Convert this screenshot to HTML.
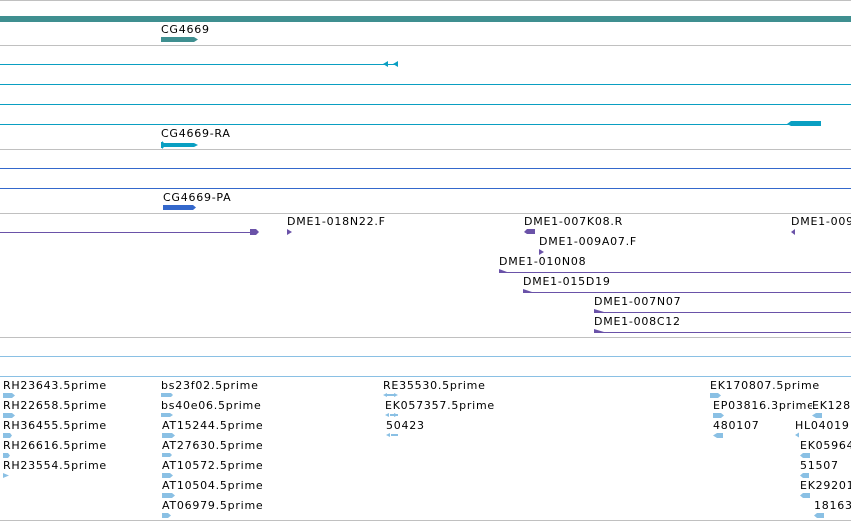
<!DOCTYPE html>
<html><head><meta charset="utf-8"><style>
body{margin:0;width:851px;height:521px;overflow:hidden;background:#fff;position:relative;font-family:"DejaVu Sans","Liberation Sans",sans-serif;font-size:11px;color:#000}
div{position:absolute}
.h{left:0;width:851px;height:1px}
.g{background:#c0c0c0}
.c{background:#0a9fc2}
.b{background:#3468cc}
.p{background:#6a52a8}
.l{background:#8ac0e4}
.t{line-height:13px;white-space:nowrap;letter-spacing:0.75px}
svg{position:absolute;left:0;top:0}
</style></head><body>
<div class="h g" style="top:0"></div>
<div class="h" style="top:16px;height:6px;background:#3f8f90"></div>
<div class="h g" style="top:45px"></div>
<div class="t" style="left:161px;top:23px">CG4669</div>
<div class="h c" style="top:64px;width:398px"></div>
<div class="h c" style="top:84px"></div>
<div class="h c" style="top:104px"></div>
<div class="h c" style="top:124px;width:820px"></div>
<div class="t" style="left:161px;top:127px">CG4669-RA</div>
<div class="h g" style="top:149px"></div>
<div class="h b" style="top:168px"></div>
<div class="h b" style="top:188px"></div>
<div class="t" style="left:163px;top:191px">CG4669-PA</div>
<div class="h g" style="top:213px"></div>
<div class="h p" style="top:232px;width:256px"></div>
<div class="t" style="left:287px;top:215px">DME1-018N22.F</div>
<div class="t" style="left:524px;top:215px">DME1-007K08.R</div>
<div class="t" style="left:791px;top:215px">DME1-009A07.R</div>
<div class="t" style="left:539px;top:235px">DME1-009A07.F</div>
<div class="t" style="left:499px;top:255px">DME1-010N08</div>
<div class="h p" style="top:272px;left:499px;width:352px"></div>
<div class="t" style="left:523px;top:275px">DME1-015D19</div>
<div class="h p" style="top:292px;left:523px;width:328px"></div>
<div class="t" style="left:594px;top:295px">DME1-007N07</div>
<div class="h p" style="top:312px;left:594px;width:257px"></div>
<div class="t" style="left:594px;top:315px">DME1-008C12</div>
<div class="h p" style="top:332px;left:594px;width:257px"></div>
<div class="h g" style="top:337px"></div>
<div class="h l" style="top:356px"></div>
<div class="h l" style="top:376px"></div>
<div class="h g" style="top:520px"></div>

<div class="t" style="left:3px;top:379px">RH23643.5prime</div>
<div class="t" style="left:3px;top:399px">RH22658.5prime</div>
<div class="t" style="left:3px;top:419px">RH36455.5prime</div>
<div class="t" style="left:3px;top:439px">RH26616.5prime</div>
<div class="t" style="left:3px;top:459px">RH23554.5prime</div>
<div class="t" style="left:161px;top:379px">bs23f02.5prime</div>
<div class="t" style="left:161px;top:399px">bs40e06.5prime</div>
<div class="t" style="left:162px;top:419px">AT15244.5prime</div>
<div class="t" style="left:162px;top:439px">AT27630.5prime</div>
<div class="t" style="left:162px;top:459px">AT10572.5prime</div>
<div class="t" style="left:162px;top:479px">AT10504.5prime</div>
<div class="t" style="left:162px;top:499px">AT06979.5prime</div>
<div class="t" style="left:383px;top:379px">RE35530.5prime</div>
<div class="t" style="left:385px;top:399px">EK057357.5prime</div>
<div class="t" style="left:386px;top:419px">50423</div>
<div class="t" style="left:710px;top:379px">EK170807.5prime</div>
<div class="t" style="left:713px;top:399px">EP03816.3prime</div>
<div class="t" style="left:812px;top:399px;background:#fff">EK128</div>
<div class="t" style="left:713px;top:419px">480107</div>
<div class="t" style="left:795px;top:419px">HL04019</div>
<div class="t" style="left:800px;top:439px">EK05964</div>
<div class="t" style="left:800px;top:459px">51507</div>
<div class="t" style="left:800px;top:479px">EK29201</div>
<div class="t" style="left:814px;top:499px">18163</div>

<svg width="851" height="521">
<g fill="#3f8f90"><path d="M161 37h33l4 2.5-4 2.5h-33z"/></g>
<g fill="#0a9fc2">
<path d="M383 64l5-3v6z M393 64l5-3v6z"/>
<path d="M787 124l4-3h30v5h-30z"/>
<path d="M161 142h1v-1l2 2h30l4 2-4 2h-30l-2 2v-1h-1z"/>
</g>
<g fill="#3468cc"><path d="M163 205h30l3 2.5-3 2.5h-30z"/></g>
<g fill="#6a52a8">
<path d="M250 229h6l3 3-3 3h-6z"/>
<path d="M287 229l5 3-5 3z"/>
<path d="M524 232l3-3h8v5h-8z"/>
<path d="M539 249l5 3-5 3z"/>
<path d="M791 232l4-3v6z"/>
<path d="M499 269l8 3h-8v2z"/>
<path d="M523 289l9 3h-9v2z"/>
<path d="M594 309l10 3h-10v2z"/>
<path d="M594 329l10 3h-10v2z"/>
</g>
<g fill="#8ac0e4">
<path d="M3 393h9l3 2.5-3 2.5h-9z"/>
<path d="M3 413h9l3 2.5-3 2.5h-9z"/>
<path d="M3 433h7l2 2.5-2 2.5h-7z"/>
<path d="M3 453h5l2 2.5-2 2.5h-5z"/>
<path d="M3 473l6 2.5-6 2.5z"/>
<path d="M161 393h4l3 2-3 2h-4z M165 393h6l2 2-2 2h-6z"/>
<path d="M161 413h9l3 2-3 2h-9z"/>
<path d="M162 433h10l3 2.5-3 2.5h-10z"/>
<path d="M162 453h8l2 2-2 2h-8z"/>
<path d="M162 473h8l3 2.5-3 2.5h-8z"/>
<path d="M162 493h10l3 2.5-3 2.5h-10z"/>
<path d="M162 513h6l3 2.5-3 2.5h-6z"/>
<path d="M383 395l4-2v1h7v-1l4 2-4 2v-1h-7v1z"/>
<path d="M385 415l4-2v4z M390 414h8v2h-8z M394 413l4 2-4 2z"/>
<path d="M386 435l4-2v4z M391 434h7v2h-7z"/>
<path d="M710 393h8l3 2.5-3 2.5h-8z"/>
<path d="M713 413h8l3 2.5-3 2.5h-8z"/>
<path d="M713 435.5l4-2.5h6v5h-6z"/>
<path d="M812 415.5l4-2.5h6v5h-6z"/>
<path d="M795 435l4-2.5v5z"/>
<path d="M800 455.5l3-2.5h7v5h-7z"/>
<path d="M800 475.5l3-2.5h6v5h-6z"/>
<path d="M800 495.5l3-2.5h7v5h-7z"/>
<path d="M814 515.5l3-2.5h7v5h-7z"/>
</g>
</svg>
</body></html>
